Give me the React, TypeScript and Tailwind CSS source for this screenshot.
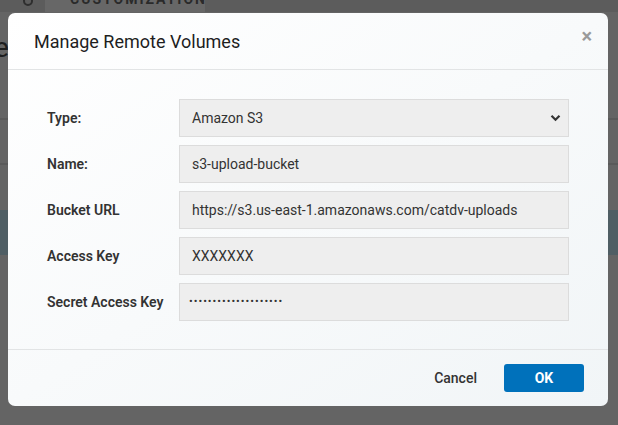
import React from "react";

type Field = {
  label: string;
  value: string;
  select?: boolean;
  secret?: boolean;
};

const fields: Field[] = [
  { label: "Type:", value: "Amazon S3", select: true },
  { label: "Name:", value: "s3-upload-bucket" },
  { label: "Bucket URL", value: "https://s3.us-east-1.amazonaws.com/catdv-uploads" },
  { label: "Access Key", value: "XXXXXXX" },
  { label: "Secret Access Key", value: "••••••••••••••••••••", secret: true },
];

const Chevron = () => (
  <svg width="11" height="8" viewBox="0 0 11 8" fill="none">
    <path d="M1.5 1.8 5.5 5.8 9.5 1.8" stroke="#333" strokeWidth="2.2" />
  </svg>
);

const Backdrop = () => (
  <div className="flex flex-col h-full">
    <div className="flex h-[12px] bg-[#5c5c5c] overflow-hidden">
      <div className="w-[45px] flex justify-end pr-[12px]">
        <span className="block w-[10px] h-[10px] -mt-[4px] rounded-full border-2 border-[#2e2e2e]" />
      </div>
      <div className="w-[160px] bg-[#676767] flex items-start pl-[25px] gap-[20px]">
        <span className="-mt-[11px] text-[14px] font-bold tracking-[2px] text-[#2a2a2a]">CUSTOMIZATION</span>
        <svg width="10" height="10" viewBox="0 0 10 10" className="-mt-[2px]">
          <path d="M1 1 6 7" stroke="#2a2a2a" strokeWidth="2" />
        </svg>
      </div>
    </div>
    <div className="h-[106px] overflow-hidden pt-[22px]">
      <span className="block -ml-[6px] text-[28px] leading-none text-[#1d1d1d]">es</span>
    </div>
    <div className="h-[2px] bg-[#5a5a5a]" />
    <div className="h-[43px]" />
    <div className="h-[2px] bg-[#5a5a5a]" />
    <div className="h-[45px]" />
    <div className="h-[45px] bg-[#4f5e64]" />
    <div className="flex-1" />
  </div>
);

export default function App() {
  return (
    <div
      className="relative w-[618px] h-[425px] overflow-hidden bg-[#646464]"
      style={{ fontFamily: "Roboto, 'Liberation Sans', sans-serif" }}
    >
      <Backdrop />

      <div className="absolute left-[8px] top-[13px] w-[600px] h-[393px] rounded-[7px] bg-gradient-to-br from-white to-[#f1f5f7] flex flex-col">
        <div className="h-[57px] border-b border-[#e2e4e5] flex items-center justify-between pl-[26px] pr-[16px]">
          <h1 className="text-[18px] text-[#1e1e1e]">Manage Remote Volumes</h1>
          <span className="text-[20px] font-bold text-[#9a9a9a] leading-none -mt-[10px]">×</span>
        </div>

        <div className="flex-1 flex flex-col gap-[8px] pl-[39px] pt-[29px]">
          {fields.map((f) => (
            <div key={f.label} className="flex items-center">
              <div className="w-[132px] text-[14px] font-semibold text-[#333]">{f.label}</div>
              <div
                className={
                  f.secret
                    ? "w-[390px] h-[38px] bg-[#eeeeee] border border-[#dcdcdc] pl-[9px] flex items-center text-[11px] tracking-[1px] text-[#333]"
                    : "w-[390px] h-[38px] bg-[#eeeeee] border border-[#dcdcdc] pl-[12px] pr-[7px] flex items-center justify-between text-[14px] text-[#333]"
                }
              >
                <span>{f.value}</span>
                {f.select && <Chevron />}
              </div>
            </div>
          ))}
        </div>

        <div className="h-[57px] border-t border-[#e2e4e5] flex items-center justify-end pr-[24px] gap-[27px]">
          <button className="text-[14px] font-medium text-[#333]">Cancel</button>
          <button className="w-[80px] h-[28px] rounded-[3px] bg-[#0071bb] text-white text-[14px] font-bold">
            OK
          </button>
        </div>
      </div>
    </div>
  );
}
